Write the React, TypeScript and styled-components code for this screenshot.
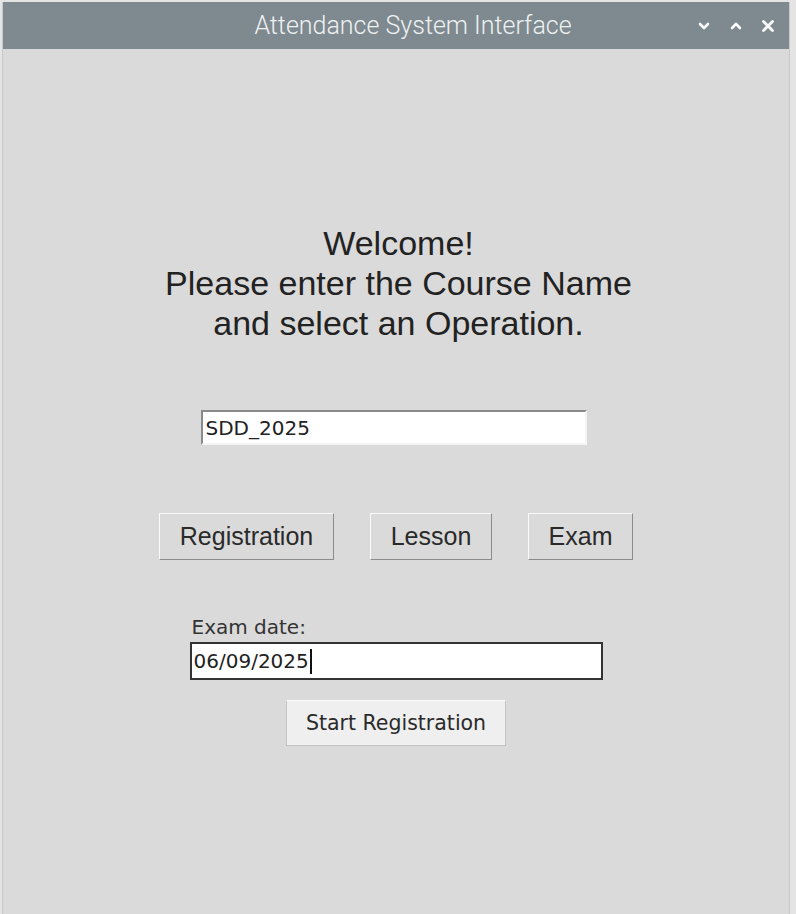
import { createGlobalStyle } from "styled-components";
import styled from "styled-components";

const GlobalStyle = createGlobalStyle`
  html, body {
    margin: 0;
    padding: 0;
    background: #e4e4e4;
  }
  #root {
    height: 914px;
  }
`;

const Screen = styled.div`
  height: 914px;
  padding: 2px 6px 0 2px;
  box-sizing: border-box;
  display: flex;
`;

const Window = styled.div`
  flex: 1;
  display: flex;
  flex-direction: column;
  background: #dadada;
  border-left: 1px solid #c9c9c9;
  border-right: 1px solid #c9c9c9;
`;

const TitleBar = styled.div`
  height: 47px;
  background: #7e8a8f;
  display: flex;
  align-items: center;
  font-family: Roboto, "Liberation Sans", sans-serif;
  color: #eef1f2;
`;

const Title = styled.div`
  flex: 1;
  text-align: center;
  font-size: 25px;
  font-weight: 300;
  padding-left: 128px;
`;

const Controls = styled.div`
  display: flex;
  gap: 14px;
  padding-right: 12px;
  align-items: center;
`;

const CtrlIcon = styled.svg`
  width: 18px;
  height: 18px;
  display: block;
`;

const Content = styled.div`
  flex: 1;
  display: flex;
  flex-direction: column;
  align-items: center;
  padding-top: 174px;
`;

const Heading = styled.div`
  font-family: "Liberation Sans", Arial, sans-serif;
  font-size: 34px;
  line-height: 40px;
  color: #222;
  text-align: center;
  margin-left: 5px;
`;

const CourseEntry = styled.input`
  margin-top: 67px;
  margin-left: -5px;
  width: 386px;
  height: 35px;
  box-sizing: border-box;
  border: 2px solid;
  border-color: #8a8a8a #f4f4f4 #f4f4f4 #8a8a8a;
  background: #fff;
  font-family: "DejaVu Sans", sans-serif;
  font-size: 20px;
  color: #222;
  padding: 0 3px;
  outline: none;
`;

const ButtonRow = styled.div`
  margin-top: 68px;
  display: flex;
  gap: 36px;
  margin-left: 0px;
`;

const OpButton = styled.button<{ w: number }>`
  width: ${(p) => p.w}px;
  height: 47px;
  box-sizing: border-box;
  background: #dadada;
  border: 1px solid;
  border-color: #fafafa #8c8c8c #8c8c8c #fafafa;
  font-family: "Liberation Sans", Arial, sans-serif;
  font-size: 25px;
  color: #2a2a2a;
  padding: 0;
`;

const DateBlock = styled.div`
  margin-top: 54px;
  display: flex;
  flex-direction: column;
  align-items: center;
`;

const DateLabel = styled.div`
  align-self: flex-start;
  margin-left: 2px;
  font-family: "DejaVu Sans", sans-serif;
  font-size: 20px;
  color: #333;
  height: 26px;
  line-height: 26px;
`;

const DateEntry = styled.div`
  margin-top: 2px;
  width: 413px;
  height: 38px;
  box-sizing: border-box;
  border: 2px solid #333;
  background: #fff;
  display: flex;
  align-items: center;
  padding: 0 2px;
  font-family: "DejaVu Sans", sans-serif;
  font-size: 20px;
  color: #222;
`;

const Caret = styled.span`
  display: inline-block;
  width: 2px;
  height: 25px;
  background: #111;
  margin-left: 1px;
`;

const StartButton = styled.button`
  margin-top: 20px;
  width: 220px;
  height: 46px;
  box-sizing: border-box;
  background: #efefef;
  border: 1px solid;
  border-color: #fafafa #c4c4c4 #c4c4c4 #c4c4c4;
  font-family: "DejaVu Sans", sans-serif;
  font-size: 20.5px;
  color: #2a2a2a;
  padding: 0;
`;

export default function App() {
  return (
    <>
      <GlobalStyle />
      <Screen>
        <Window>
          <TitleBar>
            <Title>Attendance System Interface</Title>
            <Controls>
              <CtrlIcon viewBox="0 0 18 18">
                <path d="M5 7 L9 11 L13 7" stroke="#fff" strokeWidth="2.6" fill="none" strokeLinecap="round" strokeLinejoin="round" />
              </CtrlIcon>
              <CtrlIcon viewBox="0 0 18 18">
                <path d="M5 11 L9 7 L13 11" stroke="#fff" strokeWidth="2.6" fill="none" strokeLinecap="round" strokeLinejoin="round" />
              </CtrlIcon>
              <CtrlIcon viewBox="0 0 18 18">
                <path d="M4.5 4.5 L13.5 13.5 M13.5 4.5 L4.5 13.5" stroke="#fff" strokeWidth="2.8" fill="none" strokeLinecap="round" />
              </CtrlIcon>
            </Controls>
          </TitleBar>
          <Content>
            <Heading>
              Welcome!
              <br />
              Please enter the Course Name
              <br />
              and select an Operation.
            </Heading>
            <CourseEntry defaultValue="SDD_2025" />
            <ButtonRow>
              <OpButton w={175}>Registration</OpButton>
              <OpButton w={122}>Lesson</OpButton>
              <OpButton w={105}>Exam</OpButton>
            </ButtonRow>
            <DateBlock>
              <DateLabel>Exam date:</DateLabel>
              <DateEntry>
                06/09/2025
                <Caret />
              </DateEntry>
              <StartButton>Start Registration</StartButton>
            </DateBlock>
          </Content>
        </Window>
      </Screen>
    </>
  );
}
